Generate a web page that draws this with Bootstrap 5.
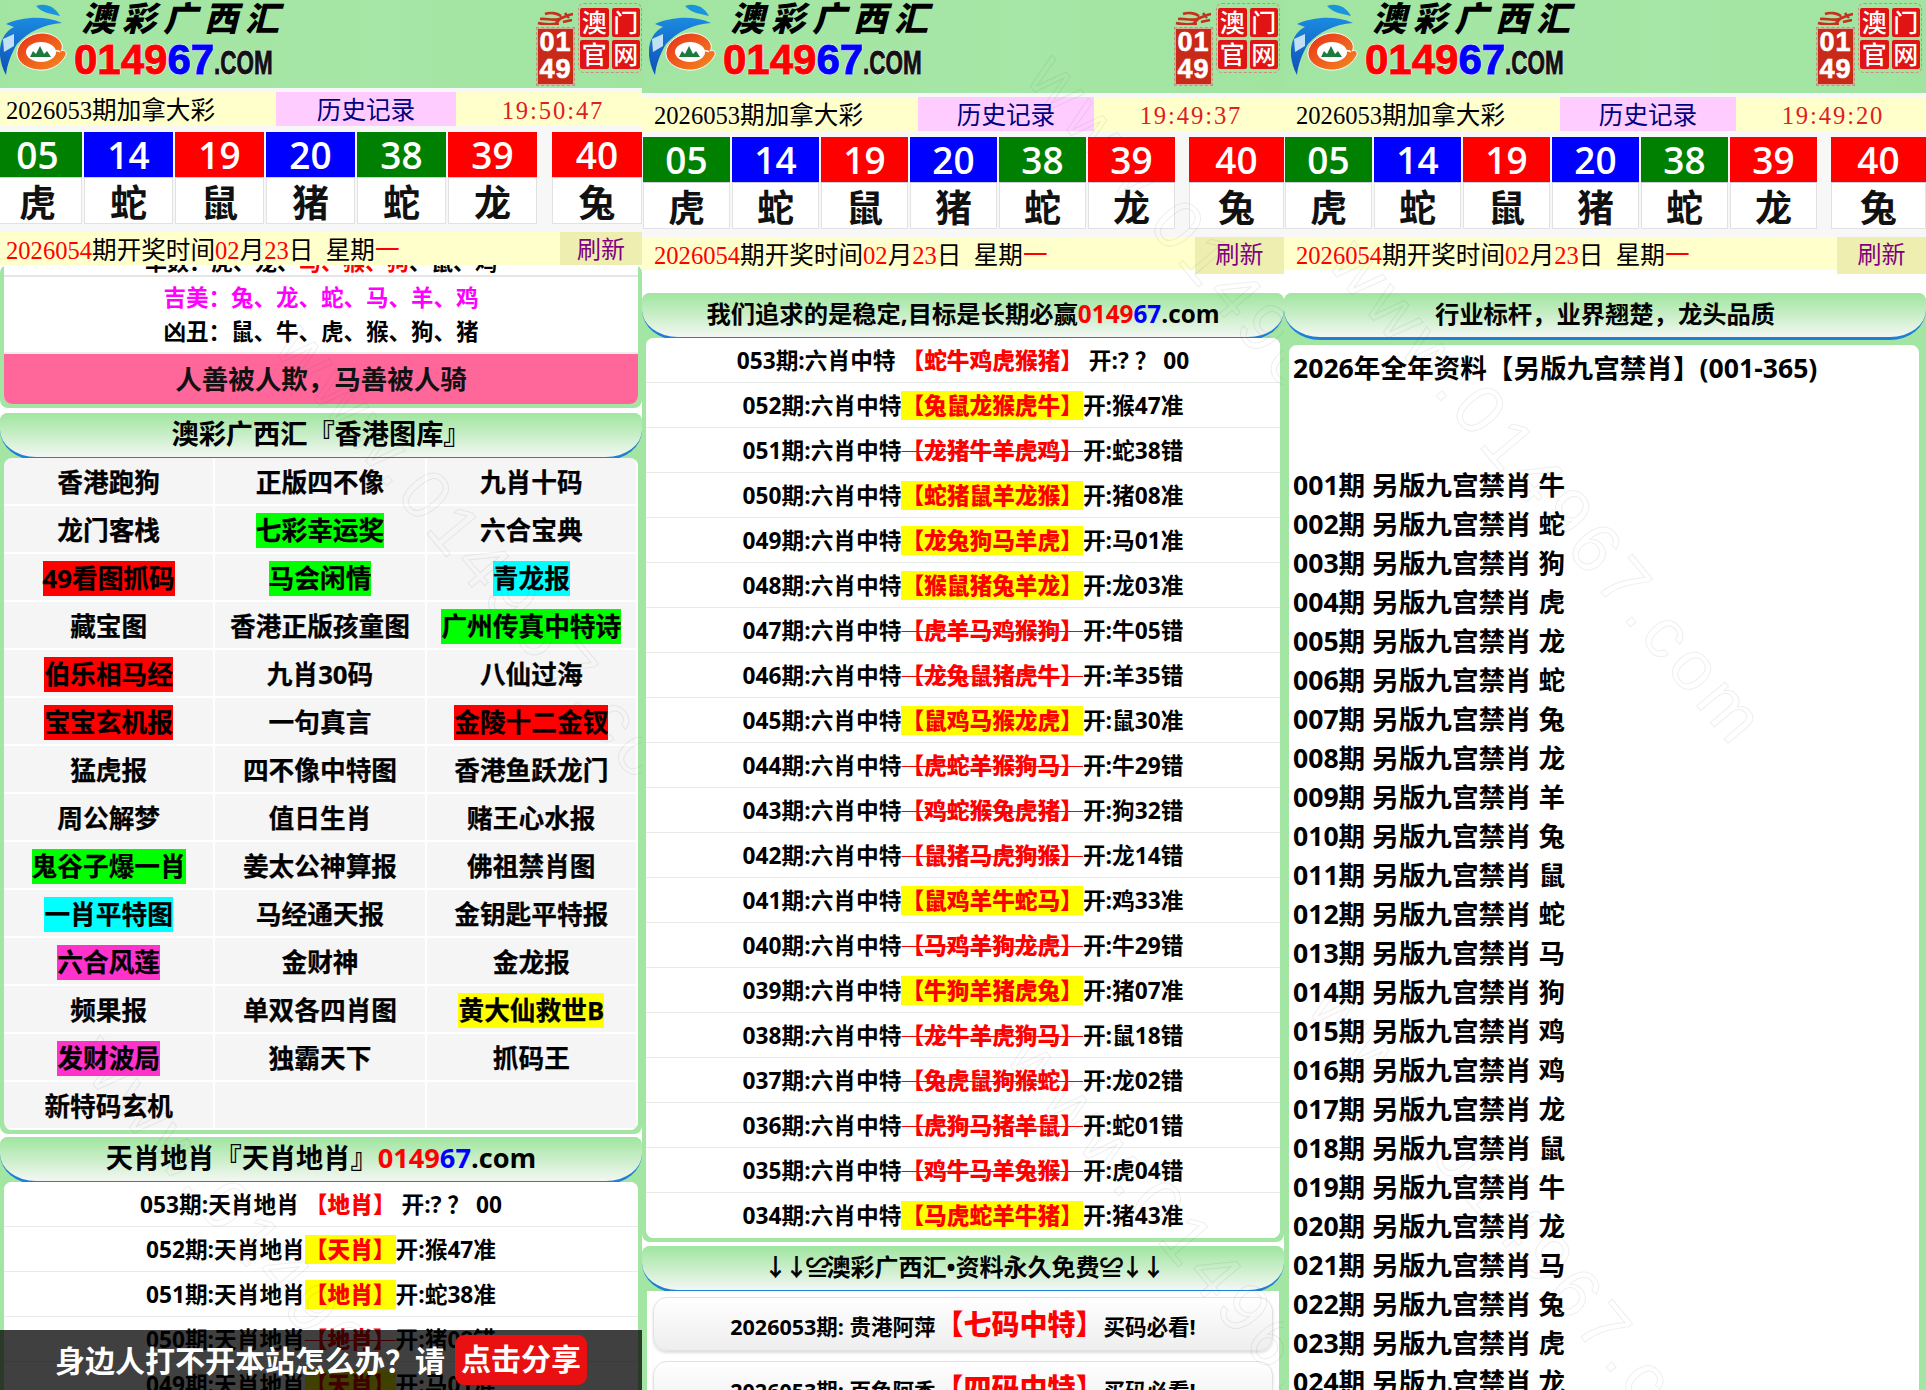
<!DOCTYPE html>
<html lang="zh-CN">
<head>
  <meta charset="UTF-8">
  <title>澳彩广西汇</title>
  <link rel="stylesheet" href="https://cdn.jsdelivr.net/npm/bootstrap@5.3.0/dist/css/bootstrap.min.css">
  <style>
    html, body { margin: 0; background: #fff; }
    body { width: 1926px; height: 1390px; overflow: hidden; font-family: "Open Sans", "Noto Sans CJK SC", sans-serif; color: #000; }

    .shot { width: 642px; height: 1390px; overflow: hidden; position: relative; flex: none; background: #fff; --head: 93px; --ball: 87px; --ball7: 95px; --first: 1px; --seventh: 12px; --brand: 7px; --rec-left: 276px; --rec-mid: 176px; --txt-left: 12px; --time-left: 4px; --refresh: 89px; --refresh-h: 37px; }
    .shot-a { --head: 88px; --ball: 89px; --ball7: 90px; --first: -7px; --seventh: 13px; --brand: 0px; --rec-mid: 180px; --txt-left: 6px; --time-left: 8px; --refresh: 82px; --refresh-h: 33px; }

    .site-head { height: var(--head); background: linear-gradient(90deg, #a2e5a2, #a6e6a6 60%, #a0e4a0); padding-left: var(--brand); padding-right: 4px; }
    .shot-a .site-head { padding-right: 0; }
    .brand-zh { font-weight: 900; font-style: italic; font-size: 34px; line-height: 37px; letter-spacing: 7px; margin: 0 0 0 7px; white-space: nowrap; }
    .brand-num { font-family: "Liberation Sans", Arial, sans-serif; font-weight: 700; font-size: 42px; line-height: 38px; margin-top: 4px; white-space: nowrap; text-shadow: 1px 0 #fff, -1px 0 #fff, 0 1px #fff, 0 -1px #fff; -webkit-text-stroke: 1px currentColor; }
    .brand-com { display: inline-block; font-size: 33px; color: #111; transform: scaleX(.68); transform-origin: 0 50%; }
    .tone-red { color: #f00; }
    .tone-blue { color: #00f; }

    .seal-box { width: 37px; }
    .seal-num { background: #c82a1a; border: 1px solid #d9a89c; outline: 1px dashed #c9907f; color: #fff; font-family: "Liberation Sans", sans-serif; font-weight: 700; font-size: 27px; line-height: 27px; text-align: center; height: 57px; letter-spacing: 1px; -webkit-text-stroke: .6px #fff; }
    .seal-grid { width: 64px; height: 70px; margin: 3px 0 0 4px; padding: 4px 1px; border: 1px dashed #c9907f; border-radius: 6px; display: grid; grid-template-columns: 1fr 1fr; gap: 3px; }
    .seal-grid span { background: #e01414; color: #fff; font-size: 25px; font-weight: 500; line-height: 29px; text-align: center; border-radius: 2px; }

    .top-zone { background: #f7f7f7; padding-top: 4px; }
    .rec-row { height: 34px; background: #ffc; font-family: "Liberation Serif", "Noto Sans CJK SC", serif; font-size: 24.6px; line-height: 30px; }
    .rec-left { width: var(--rec-left); padding: 4px 0 0 var(--txt-left); white-space: nowrap; }
    .rec-mid { width: var(--rec-mid); background: #fcf; color: #000080; text-align: center; padding-top: 4px; }
    .rec-time { flex: 1; color: #e02020; text-align: center; letter-spacing: 1.9px; padding: 4px 0 0 var(--time-left); }

    .ball-row { margin: 6px 0 8px; margin-left: var(--first); gap: 2px; }
    .ball-cell { width: var(--ball); flex: none; }
    .ball-cell:last-child { width: var(--ball7); margin-left: var(--seventh); }
    .ball-num { height: 45px; color: #fff; font-size: 37px; font-weight: 600; line-height: 45px; text-align: center; border-bottom: 1px solid #ccd; box-sizing: content-box; }
    .ball-zod { height: 46px; background: #fff; border: 1px solid #e2e2e2; border-top: 0; padding-top: 4px; font-size: 37px; font-weight: 700; line-height: 41px; text-align: center; color: #111; }
    .bg-g { background: #008000; }
    .bg-b { background: #00f; }
    .bg-r { background: #f00; }

    .next-row { background: #fff; align-items: flex-start; }
    .next-txt { flex: 1; height: 33px; background: #ffc; padding: 4px 0 0 var(--txt-left); font-family: "Liberation Serif", "Noto Sans CJK SC", serif; font-size: 24.6px; line-height: 29px; white-space: pre; }
    .next-btn { width: var(--refresh); height: var(--refresh-h); background: #eeeeb0; color: #800080; padding-top: 4px; font-size: 24px; font-family: "Liberation Serif", "Noto Sans CJK SC", serif; line-height: 29px; text-align: center; flex: none; }

    .sec { background: #a3e6a3; border-radius: 8px; margin-bottom: 4px; }
    .sec-gap { margin-bottom: 5px; }
    .sec-tight { margin-bottom: 3px; }
    .sec-end { margin-bottom: 0; }
    .sec-bar { height: 47px; background: linear-gradient(#a3e6a3 5%, #f3f7f3 100%); border-bottom: 3px solid #1f7fd6; border-radius: 8px 8px 36px 36px / 8px 8px 30px 30px; font-size: 24.3px; font-weight: 700; line-height: 41px; text-align: center; white-space: nowrap; }
    .sec-bar-lg { font-size: 27.2px; }
    .sec-bar-sm { font-size: 24px; }
    .sec-bar-sm span { letter-spacing: -3px; }
    .sec-body { margin: -2px 4px 0; background: #fff; border-radius: 8px; overflow: hidden; }
    .sec-flat { margin-top: 0; border-radius: 0 0 8px 8px; }
    .sec-wrap { padding-bottom: 4px; }

    .sec-clip { height: 12px; overflow: hidden; border-bottom: 2px solid #e6e6e6; font-size: 22px; font-weight: 700; line-height: 20px; text-align: center; }
    .sec-clip span { display: block; margin-top: -14px; }
    .lucky { font-size: 22.5px; font-weight: 700; line-height: 34px; text-align: center; height: 75px; padding-top: 4px; color: #000; }
    .lucky-on { color: #f0f; }
    .slogan { height: 52px; background: #f69; font-size: 26.5px; font-weight: 700; line-height: 50px; text-align: center; color: #111; border-top: 2px solid #eee; }

    .tuku { background: #f5f5f5; }
    .tuku-cell { height: 48px; padding-top: 2px; border-bottom: 2px solid #fff; border-right: 2px solid #fff; font-size: 25.7px; font-weight: 700; white-space: nowrap; color: #000; -webkit-text-stroke: .25px #000; }
    .tuku-cell span { line-height: 35px; }
    .hl-lime { background: #0f0; }
    .hl-red { background: #f00; }
    .hl-cyan { background: #0ff; }
    .hl-pink { background: #f3c; }
    .hl-yellow { background: #ff0; }

    .pick-item { height: 45px; padding: 2px 0 0; border: 0; border-bottom: 2px solid #e8ece8; font-size: 22.7px; font-weight: 700; white-space: pre; color: #000; }
    .pick-item b { color: #f00; display: inline-block; line-height: 29px; }
    .pick-item b.hit { background: #ff0; }
    .pick-item b.miss { text-decoration: line-through; text-decoration-thickness: 1px; }

    .free-box { background: #fff; padding: 6px 6px 0; margin: -2px 5px 0 5px; }
    .free-btn { height: 54px; margin-bottom: 10px; border: 1px solid #e2e2e2; border-radius: 14px; background: linear-gradient(#fff, #eee); box-shadow: 0 2px 3px #ddd; font-size: 21.5px; font-weight: 700; white-space: nowrap; color: #000; }
    .free-btn b { color: #f00; font-size: 28px; }

    .year-box { margin: 5px 7px 0 5px; padding: 4px 4px 0; background: #fff; border-radius: 8px; font-size: 26.6px; font-weight: 700; line-height: 39px; color: #000; white-space: pre; height: 1100px; }
    .shot-c .sec { margin-bottom: 0; height: 1100px; border-radius: 8px 8px 0 0; }

    .share-bar { position: absolute; left: 0; right: 0; bottom: 0; height: 60px; background: rgba(0, 0, 0, .75); color: #fff; font-size: 30px; font-weight: 700; padding-left: 55px; gap: 10px; z-index: 5; white-space: nowrap; }
    .share-btn { background: #e81010; border-radius: 9px; height: 50px; line-height: 48px; width: 132px; text-align: center; }

    .mark-txt { position: absolute; font-family: "Liberation Sans", sans-serif; font-size: 70px; letter-spacing: 6px; color: transparent; -webkit-text-stroke: 1px rgba(90, 90, 90, .1); transform: rotate(50deg); transform-origin: 0 0; white-space: nowrap; pointer-events: none; z-index: 4; }
    .mark-a { left: 330px; top: 300px; }
    .mark-b { left: 130px; top: 1010px; }
    .mark-c { left: 440px; top: 30px; }
    .mark-d { left: 420px; top: 1010px; }
    .mark-e { left: 100px; top: 215px; }
    .mark-f { left: 80px; top: 960px; }
  </style>
</head>

<body>
  <div class="d-flex" id="screens"></div>

  <script>
    const logo = `<svg width="70" height="76" viewBox="0 0 70 76">
      <defs>
        <linearGradient id="wingFill" x1="0" y1="0" x2="0" y2="1"><stop offset="0" stop-color="#1b8ae0"/><stop offset="1" stop-color="#0d4fb8"/></linearGradient>
        <linearGradient id="ringFill" x1="0" y1="0" x2="1" y2="1"><stop offset="0" stop-color="#e8301a"/><stop offset="1" stop-color="#f58a1e"/></linearGradient>
      </defs>
      <path d="M36 6C44 3 54 5 60 16C52 14 42 13 36 6Z" fill="#1a94dc"/>
      <path d="M6 24C22 17 44 15 62 23C44 24 28 32 17 44C11 54 7 65 6 75C-1 62 -2 48 3 38C6 32 10 29 14 27Z" fill="url(#wingFill)"/>
      <path d="M3 39L14 34L14 46L4 52Z" fill="#bfe0f5"/>
      <path d="M42 33C30 33 18 42 17 52C16 63 29 71 44 70C54 69 62 63 66 55C67 52 64 49 61 51C66 44 56 33 42 33Z" fill="url(#ringFill)" stroke="#fff" stroke-width="1"/>
      <ellipse cx="41" cy="52" rx="15" ry="10" fill="#fff"/>
      <path d="M30 57L33 51L36 54L40 46L44 54L47 51L51 57Z" fill="#1e7a3c"/>
      <path d="M60 52C56 49 52 52 55 55" fill="none" stroke="#fff" stroke-width="1.5"/>
    </svg>`;

    const dragon = `<svg width="37" height="14" viewBox="0 0 37 14"><path d="M1 12C8 14 14 13 22 13M3 8C10 7 14 10 22 8C28 6 30 4 36 3M8 3C13 1 20 2 24 5M26 11L35 9M18 13L25 6M28 2L32 7" fill="none" stroke="#c8301e" stroke-width="2.6"/></svg>`;

    function header() {
      return `<div class="site-head d-flex justify-content-between">
        <div class="d-flex">
          ${logo}
          <div class="ms-1">
            <div class="brand-zh">澳彩广西汇</div>
            <div class="brand-num"><span class="tone-red">0149</span><span class="tone-blue">67</span><span class="brand-com">.COM</span></div>
          </div>
        </div>
        <div class="d-flex">
          <div class="seal-box pt-1">${dragon}<div class="seal-num">01<br>49</div></div>
          <div class="seal-grid"><span>澳</span><span>门</span><span>官</span><span>网</span></div>
        </div>
      </div>`;
    }

    const balls = [["05", "g", "虎"], ["14", "b", "蛇"], ["19", "r", "鼠"], ["20", "b", "猪"], ["38", "g", "蛇"], ["39", "r", "龙"], ["40", "r", "兔"]];

    function drawInfo(time) {
      const cells = balls.map(b => `<div class="ball-cell"><div class="ball-num bg-${b[1]}">${b[0]}</div><div class="ball-zod">${b[2]}</div></div>`).join("");
      return `<div class="top-zone">
        <div class="rec-row d-flex">
          <div class="rec-left">2026053期加拿大彩</div>
          <div class="rec-mid">历史记录</div>
          <div class="rec-time">${time}</div>
        </div>
        <div class="ball-row d-flex">${cells}</div>
        <div class="next-row d-flex">
          <div class="next-txt"><span class="tone-red">2026054</span>期开奖时间<span class="tone-red">02</span>月<span class="tone-red">23</span>日  星期<span class="tone-red">一</span></div>
          <div class="next-btn">刷新</div>
        </div>
      </div>`;
    }

    const tuku = [
      ["香港跑狗"], ["正版四不像"], ["九肖十码"],
      ["龙门客栈"], ["七彩幸运奖", "lime"], ["六合宝典"],
      ["49看图抓码", "red"], ["马会闲情", "lime"], ["青龙报", "cyan"],
      ["藏宝图"], ["香港正版孩童图"], ["广州传真中特诗", "lime"],
      ["伯乐相马经", "red"], ["九肖30码"], ["八仙过海"],
      ["宝宝玄机报", "red"], ["一句真言"], ["金陵十二金钗", "red"],
      ["猛虎报"], ["四不像中特图"], ["香港鱼跃龙门"],
      ["周公解梦"], ["值日生肖"], ["赌王心水报"],
      ["鬼谷子爆一肖", "lime"], ["姜太公神算报"], ["佛祖禁肖图"],
      ["一肖平特图", "cyan"], ["马经通天报"], ["金钥匙平特报"],
      ["六合风莲", "pink"], ["金财神"], ["金龙报"],
      ["频果报"], ["单双各四肖图"], ["黄大仙救世B", "yellow"],
      ["发财波局", "pink"], ["独霸天下"], ["抓码王"],
      ["新特码玄机"], [""], [""]
    ];

    // kind: "" still open, "hit" right, "miss" wrong
    function pickRow(no, label, word, result, kind) {
      return `<div class="list-group-item pick-item d-flex justify-content-center align-items-center"><span>${no}期:${label}${kind ? "" : " "}<b class="${kind}">【${word}】</b>${kind ? "" : " "}开:${result}</span></div>`;
    }

    const sixPicks = [
      ["053", "蛇牛鸡虎猴猪", "? ？ 00", ""],
      ["052", "兔鼠龙猴虎牛", "猴47准", "hit"], ["051", "龙猪牛羊虎鸡", "蛇38错", "miss"],
      ["050", "蛇猪鼠羊龙猴", "猪08准", "hit"], ["049", "龙兔狗马羊虎", "马01准", "hit"],
      ["048", "猴鼠猪兔羊龙", "龙03准", "hit"], ["047", "虎羊马鸡猴狗", "牛05错", "miss"],
      ["046", "龙兔鼠猪虎牛", "羊35错", "miss"], ["045", "鼠鸡马猴龙虎", "鼠30准", "hit"],
      ["044", "虎蛇羊猴狗马", "牛29错", "miss"], ["043", "鸡蛇猴兔虎猪", "狗32错", "miss"],
      ["042", "鼠猪马虎狗猴", "龙14错", "miss"], ["041", "鼠鸡羊牛蛇马", "鸡33准", "hit"],
      ["040", "马鸡羊狗龙虎", "牛29错", "miss"], ["039", "牛狗羊猪虎兔", "猪07准", "hit"],
      ["038", "龙牛羊虎狗马", "鼠18错", "miss"], ["037", "兔虎鼠狗猴蛇", "龙02错", "miss"],
      ["036", "虎狗马猪羊鼠", "蛇01错", "miss"], ["035", "鸡牛马羊兔猴", "虎04错", "miss"],
      ["034", "马虎蛇羊牛猪", "猪43准", "hit"]
    ];

    const skyPicks = [
      ["053", "地肖", "? ？ 00", ""], ["052", "天肖", "猴47准", "hit"], ["051", "地肖", "蛇38准", "hit"],
      ["050", "地肖", "猪08错", "miss"], ["049", "天肖", "马01准", "hit"]
    ];

    const site = '<span class="tone-red">0149</span><span class="tone-blue">67</span>.com';

    const screenA = `<div class="shot shot-a">
      ${header()}${drawInfo("19:50:47")}
      <div class="sec sec-gap"><div class="sec-body sec-flat">
        <div class="sec-clip"><span>单数：虎、龙、<span class="tone-red d-inline">马、猴、狗</span>、鼠、鸡</span></div>
        <div class="lucky"><div class="lucky-on">吉美：兔、龙、蛇、马、羊、鸡</div><div>凶丑：鼠、牛、虎、猴、狗、猪</div></div>
        <div class="slogan">人善被人欺，马善被人骑</div>
      </div><div class="sec-wrap"></div></div>
      <div class="sec sec-tight">
        <div class="sec-bar sec-bar-lg">澳彩广西汇『香港图库』</div>
        <div class="sec-body tuku"><div class="row g-0">${tuku.map(c => `<div class="col-4"><div class="tuku-cell d-flex justify-content-center align-items-center"><span class="${c[1] ? "hl-" + c[1] : ""}">${c[0]}</span></div></div>`).join("")}</div></div>
        <div class="sec-wrap"></div>
      </div>
      <div class="sec">
        <div class="sec-bar sec-bar-lg">天肖地肖『天肖地肖』${site}</div>
        <div class="sec-body"><div class="list-group list-group-flush">${skyPicks.map(p => pickRow(p[0], "天肖地肖", p[1], p[2], p[3])).join("")}</div></div>
      </div>
      <div class="share-bar d-flex align-items-center"><span>身边人打不开本站怎么办？请</span><span class="share-btn">点击分享</span></div>
      <div class="mark-txt mark-a">www.014967.com</div>
      <div class="mark-txt mark-b">www.014967.com</div>
    </div>`;

    const screenB = `<div class="shot">
      ${header()}${drawInfo("19:49:37")}
      <div class="bg-white" style="height:19px"></div>
      <div class="sec">
        <div class="sec-bar">我们追求的是稳定,目标是长期必赢${site}</div>
        <div class="sec-body"><div class="list-group list-group-flush">${sixPicks.map(p => pickRow(p[0], "六肖中特", p[1], p[2], p[3])).join("")}</div></div>
        <div class="sec-wrap"></div>
      </div>
      <div class="sec sec-end">
        <div class="sec-bar sec-bar-sm"><span>↓↓≌</span>澳彩广西汇•资料永久免费<span>≌↓↓</span></div>
        <div class="free-box">
          <div class="free-btn d-flex justify-content-center align-items-center"><span>2026053期: 贵港阿萍<b>【七码中特】</b>买码必看!</span></div>
          <div class="free-btn d-flex justify-content-center align-items-center"><span>2026053期: 百色阿香<b>【四码中特】</b>买码必看!</span></div>
        </div>
      </div>
      <div class="mark-txt mark-c">www.014967.com</div>
      <div class="mark-txt mark-d">www.014967.com</div>
    </div>`;

    const zod = ["牛", "蛇", "狗", "虎", "龙", "蛇", "兔", "龙", "羊", "兔", "鼠", "蛇", "马", "狗", "鸡", "鸡", "龙", "鼠", "牛", "龙", "马", "兔", "虎", "龙"];
    const yearLines = zod.map((z, i) => `${String(i + 1).padStart(3, "0")}期 另版九宫禁肖 ${z}`).join("\n");

    const screenC = `<div class="shot shot-c">
      ${header()}${drawInfo("19:49:20")}
      <div class="bg-white" style="height:19px"></div>
      <div class="sec">
        <div class="sec-bar">行业标杆，业界翘楚，龙头品质</div>
        <div class="year-box">2026年全年资料【另版九宫禁肖】(001-365)\n\n\n${yearLines}</div>
      </div>
      <div class="mark-txt mark-e">www.014967.com</div>
      <div class="mark-txt mark-f">www.014967.com</div>
    </div>`;

    document.getElementById("screens").innerHTML = screenA + screenB + screenC;
  </script>
  <script src="https://cdn.jsdelivr.net/npm/bootstrap@5.3.0/dist/js/bootstrap.bundle.min.js"></script>
</body>
</html>
